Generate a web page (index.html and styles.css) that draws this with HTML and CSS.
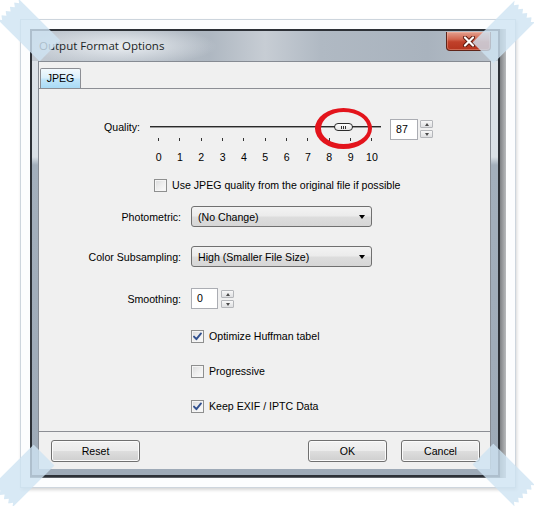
FILE: index.html
```html
<!DOCTYPE html>
<html>
<head>
<meta charset="utf-8">
<title>Output Format Options</title>
<link rel="stylesheet" href="styles.css">
</head>
<body>
<div class="stage">
  <div class="card">
    <div class="shot">
      <div class="window">
        <div class="titlebar">
          <span class="title">Output Format Options</span>
          <div class="close">
            <svg width="14" height="11" viewBox="0 0 14 11"><path d="M3 1.5 L11 9.5 M11 1.5 L3 9.5" stroke="#5a1a10" stroke-width="4" stroke-linecap="round"/><path d="M3 1.5 L11 9.5 M11 1.5 L3 9.5" stroke="#ffffff" stroke-width="2.2" stroke-linecap="round"/></svg>
          </div>
        </div>
        <div class="framebody">
          <div class="client">
            <div class="tabs"><div class="tab">JPEG</div></div>
            <div class="tabpage">
              <div class="qrow">
                <div class="qlabel">Quality:</div>
                <div class="slider">
                  <div class="track-area">
                    <div class="track"></div>
                    <div class="thumb"><i></i><i></i><i></i></div>
                  </div>
                  <div class="ticks"><span></span><span></span><span></span><span></span><span></span><span></span><span></span><span></span><span></span><span></span><span></span></div>
                  <div class="tlabels"><span>0</span><span>1</span><span>2</span><span>3</span><span>4</span><span>5</span><span>6</span><span>7</span><span>8</span><span>9</span><span>10</span></div>
                </div>
                <div class="numbox">87</div>
                <div class="spin q-spin"><div class="sbtn"><b class="up"></b></div><div class="sbtn"><b class="down"></b></div></div>
              </div>

              <div class="chkrow use-row"><span class="chk"></span><span class="chktext">Use JPEG quality from the original file if possible</span></div>

              <div class="frow photo-row">
                <div class="flabel">Photometric:</div>
                <div class="combo"><span>(No Change)</span><b class="arrow"></b></div>
              </div>
              <div class="frow color-row">
                <div class="flabel">Color Subsampling:</div>
                <div class="combo"><span>High (Smaller File Size)</span><b class="arrow"></b></div>
              </div>
              <div class="frow smooth-row">
                <div class="flabel">Smoothing:</div>
                <div class="sfield">0</div>
                <div class="spin s-spin"><div class="sbtn"><b class="up"></b></div><div class="sbtn"><b class="down"></b></div></div>
              </div>

              <div class="chkrow opt-row"><span class="chk on"><svg width="11" height="11" viewBox="0 0 11 11"><path d="M2 5.6 L4.4 8.2 L9 2.4" fill="none" stroke="#31508f" stroke-width="1.9" stroke-linecap="round" stroke-linejoin="round"/></svg></span><span class="chktext">Optimize Huffman tabel</span></div>
              <div class="chkrow prog-row"><span class="chk"></span><span class="chktext">Progressive</span></div>
              <div class="chkrow keep-row"><span class="chk on"><svg width="11" height="11" viewBox="0 0 11 11"><path d="M2 5.6 L4.4 8.2 L9 2.4" fill="none" stroke="#31508f" stroke-width="1.9" stroke-linecap="round" stroke-linejoin="round"/></svg></span><span class="chktext">Keep EXIF / IPTC Data</span></div>
            </div>
            <div class="footer">
              <div class="btn reset">Reset</div>
              <div class="spacer"></div>
              <div class="btn ok">OK</div>
              <div class="btn cancel">Cancel</div>
            </div>
          </div>
        </div>
      </div>
      <div class="bgstrip"></div>
    </div>
  </div>

  <div class="ellipse"></div>

  <div class="tape tl"></div>
  <div class="tape tr"></div>
  <div class="tape bl"></div>
  <div class="tape br"></div>
</div>
</body>
</html>
```

FILE: styles.css
```css
html, body {
  margin: 0;
  padding: 0;
  background: #ffffff;
}

.stage {
  position: relative;
  width: 534px;
  height: 506px;
  overflow: hidden;
  padding: 19px 0 0 20px;
  box-sizing: border-box;
  font-family: "Liberation Sans", Arial, sans-serif;
  font-size: 10.6px;
  color: #000;
}

/* photo mat */
.card {
  width: 496px;
  height: 469px;
  box-sizing: border-box;
  border: 1px solid #cdd5dd;
  padding: 9px;
  background: #fcfdfe;
  box-shadow: 1px 2px 3px rgba(0, 0, 0, 0.16);
}

.shot {
  display: flex;
  width: 476px;
  height: 449px;
  background: #5c6066;
}

.bgstrip {
  width: 6px;
  height: 449px;
  background: linear-gradient(to right, #7e8184, #b9bbbd);
}

/* window */
.window {
  width: 470px;
  height: 448px;
  box-sizing: border-box;
  border: 2px solid #2d3137;
  display: flex;
  flex-direction: column;
  background: linear-gradient(to bottom, #dde3e9 0, #d9e0e6 126px, #a3afbc 134px, #9eaab7 100%);
}

.titlebar {
  height: 30px;
  display: flex;
  align-items: flex-start;
  background:
    radial-gradient(ellipse 95px 20px at 90px 15px, rgba(236, 240, 244, 0.95), rgba(236, 240, 244, 0) 100%),
    linear-gradient(to right, #c2c9d1 0, #aeb7c1 38%, #c7cdd4 50%, #b0b9c3 62%, #a9b3be 85%, #b9c1ca 100%);
}

.title {
  padding-left: 7px;
  line-height: 30px;
  font-family: "Open Sans", "Noto Sans", sans-serif;
  font-size: 11.5px;
  color: #1b1f24;
  flex: 1;
}

.close {
  width: 45px;
  height: 19px;
  margin: 1px 7px 0 0;
  box-sizing: border-box;
  border: 1px solid #5f2419;
  border-top: none;
  border-radius: 0 0 4px 4px;
  background: linear-gradient(to bottom, #e3a08f 0, #d2664f 40%, #c0402a 55%, #b5351f 100%);
  display: flex;
  align-items: center;
  justify-content: center;
  box-shadow: inset 0 0 0 1px rgba(255, 200, 180, 0.35);
}

.framebody {
  padding: 0 7px 6px 6px;
}

.client {
  width: 453px;
  height: 408px;
  box-sizing: border-box;
  border: 1px solid #868b93;
  border-bottom: none;
  background: #f0f0f0;
  display: flex;
  flex-direction: column;
}

.tabs {
  height: 26px;
  padding: 6px 0 0 1px;
  box-sizing: border-box;
  display: flex;
}

.tab {
  width: 41px;
  height: 20px;
  box-sizing: border-box;
  border: 1px solid #8c8e94;
  border-bottom: none;
  border-radius: 2px 2px 0 0;
  background: linear-gradient(to bottom, #f2f9fd 0, #dcf0fb 45%, #c1e5fa 55%, #a9dbf6 100%);
  text-align: center;
  line-height: 19px;
}

.tabpage {
  height: 344px;
  box-sizing: border-box;
  border-top: 1px solid #8c8e94;
  border-bottom: 1px solid #8c8e94;
  display: flex;
  flex-direction: column;
}

/* quality row */
.qrow {
  display: flex;
  align-items: flex-start;
  margin-top: 30px;
}

.qlabel {
  width: 101px;
  text-align: right;
  line-height: 17px;
}

.slider {
  margin-left: 8px;
  width: 235px;
}

.track-area {
  position: relative;
  height: 17px;
}

.track {
  position: absolute;
  left: 2px;
  right: 2px;
  top: 7px;
  height: 2px;
  background: #2a2a2a;
  border-bottom: 1px solid #9a9a9a;
  box-sizing: border-box;
}

.thumb {
  position: absolute;
  left: 186px;
  top: 4px;
  width: 19px;
  height: 8px;
  box-sizing: border-box;
  border: 1px solid #2b2b2b;
  border-radius: 4px;
  background: linear-gradient(#ffffff, #e4e4e4);
  display: flex;
  justify-content: center;
  align-items: center;
  gap: 1px;
}

.thumb i {
  width: 1px;
  height: 3px;
  background: #333;
}

.ticks {
  display: flex;
  margin-top: 2px;
  height: 3px;
}

.ticks span {
  flex: 0 0 21.33px;
  display: flex;
  justify-content: center;
}

.ticks span::before {
  content: "";
  width: 1px;
  height: 3px;
  background: #333;
}

.tlabels {
  display: flex;
  margin-top: 10px;
  line-height: 13px;
}

.tlabels span {
  flex: 0 0 21.33px;
  text-align: center;
}

.numbox {
  margin-left: 7px;
  width: 28px;
  height: 21px;
  box-sizing: border-box;
  border: 1px solid #abadb3;
  background: #fff;
  line-height: 19px;
  padding-left: 5px;
}

.spin {
  display: flex;
  flex-direction: column;
  gap: 2px;
  margin-left: 2px;
  margin-top: 1px;
}

.sbtn {
  width: 13px;
  height: 8px;
  box-sizing: border-box;
  border: 1px solid #b4b6ba;
  border-radius: 1px;
  background: linear-gradient(#f8f8f8, #dedfe1);
  display: flex;
  align-items: center;
  justify-content: center;
}

.sbtn b {
  width: 0;
  height: 0;
  border-left: 2.5px solid transparent;
  border-right: 2.5px solid transparent;
}

.sbtn b.up {
  border-bottom: 3px solid #4a4a4a;
}

.sbtn b.down {
  border-top: 3px solid #4a4a4a;
}

/* checkbox rows */
.chkrow {
  display: flex;
  align-items: center;
  height: 14px;
}

.use-row { margin-top: 14px; padding-left: 115px; }
.opt-row { margin-top: 20px; padding-left: 152px; }
.prog-row { margin-top: 21px; padding-left: 152px; }
.keep-row { margin-top: 21px; padding-left: 152px; }

.chk {
  width: 13px;
  height: 13px;
  box-sizing: border-box;
  border: 1px solid #8e8f8f;
  background: linear-gradient(135deg, #d9dadb 0, #eeeeee 50%, #fbfbfb 100%);
  box-shadow: inset 0 0 0 1px #f5f5f5;
  display: flex;
  align-items: center;
  justify-content: center;
}

.chktext {
  margin-left: 5px;
}

/* field rows */
.frow {
  display: flex;
  align-items: center;
  height: 21px;
}

.photo-row { margin-top: 14px; }
.color-row { margin-top: 19px; }
.smooth-row { margin-top: 21px; }

.flabel {
  width: 142px;
  text-align: right;
  margin-right: 10px;
}

.combo {
  width: 181px;
  height: 21px;
  box-sizing: border-box;
  border: 1px solid #707070;
  border-radius: 3px;
  background: linear-gradient(to bottom, #f3f3f3 0, #ebebeb 48%, #dddddd 52%, #d6d6d6 100%);
  display: flex;
  align-items: center;
  padding: 0 5px 0 6px;
}

.combo span {
  flex: 1;
}

.arrow {
  width: 0;
  height: 0;
  border-left: 3.5px solid transparent;
  border-right: 3.5px solid transparent;
  border-top: 4px solid #000;
  margin-right: 1px;
}

.sfield {
  width: 27px;
  height: 21px;
  box-sizing: border-box;
  border: 1px solid #abadb3;
  background: #fff;
  line-height: 19px;
  padding-left: 5px;
}

.s-spin {
  margin-left: 3px;
}

/* footer */
.footer {
  display: flex;
  padding: 8px 10px 0 12px;
}

.spacer {
  flex: 1;
}

.btn {
  height: 22px;
  box-sizing: border-box;
  border: 1px solid #707070;
  border-radius: 3px;
  background: linear-gradient(to bottom, #f2f2f2 0, #ebebeb 48%, #dddddd 52%, #cfcfcf 100%);
  box-shadow: inset 0 0 0 1px #fbfbfb;
  text-align: center;
  line-height: 20px;
}

.reset { width: 89px; }
.ok { width: 79px; }
.cancel { width: 79px; margin-left: 14px; }

/* red annotation */
.ellipse {
  position: absolute;
  left: 315px;
  top: 108px;
  width: 57px;
  height: 41px;
  box-sizing: border-box;
  border-style: solid;
  border-color: #e3141c;
  border-width: 4px 4px 5px 6px;
  border-radius: 50%;
}

/* tape corners */
.tape {
  position: absolute;
  width: 60px;
  height: 30px;
  background: rgba(206, 227, 243, 0.8);
  transform-origin: 50% 50%;
  clip-path: polygon(0 0, 100% 0, 100% 100%, 0 100%, 4px 90%, 0 80%, 4px 70%, 0 60%, 4px 50%, 0 40%, 4px 30%, 0 20%, 4px 10%);
}

.tape.tl { left: -1px; top: 15px; transform: rotate(45deg); }
.tape.tr { left: 474px; top: 17px; transform: rotate(135deg); }
.tape.bl { left: -7px; top: 461px; transform: rotate(-45deg); }
.tape.br { left: 474px; top: 460px; transform: rotate(-135deg); }
```
